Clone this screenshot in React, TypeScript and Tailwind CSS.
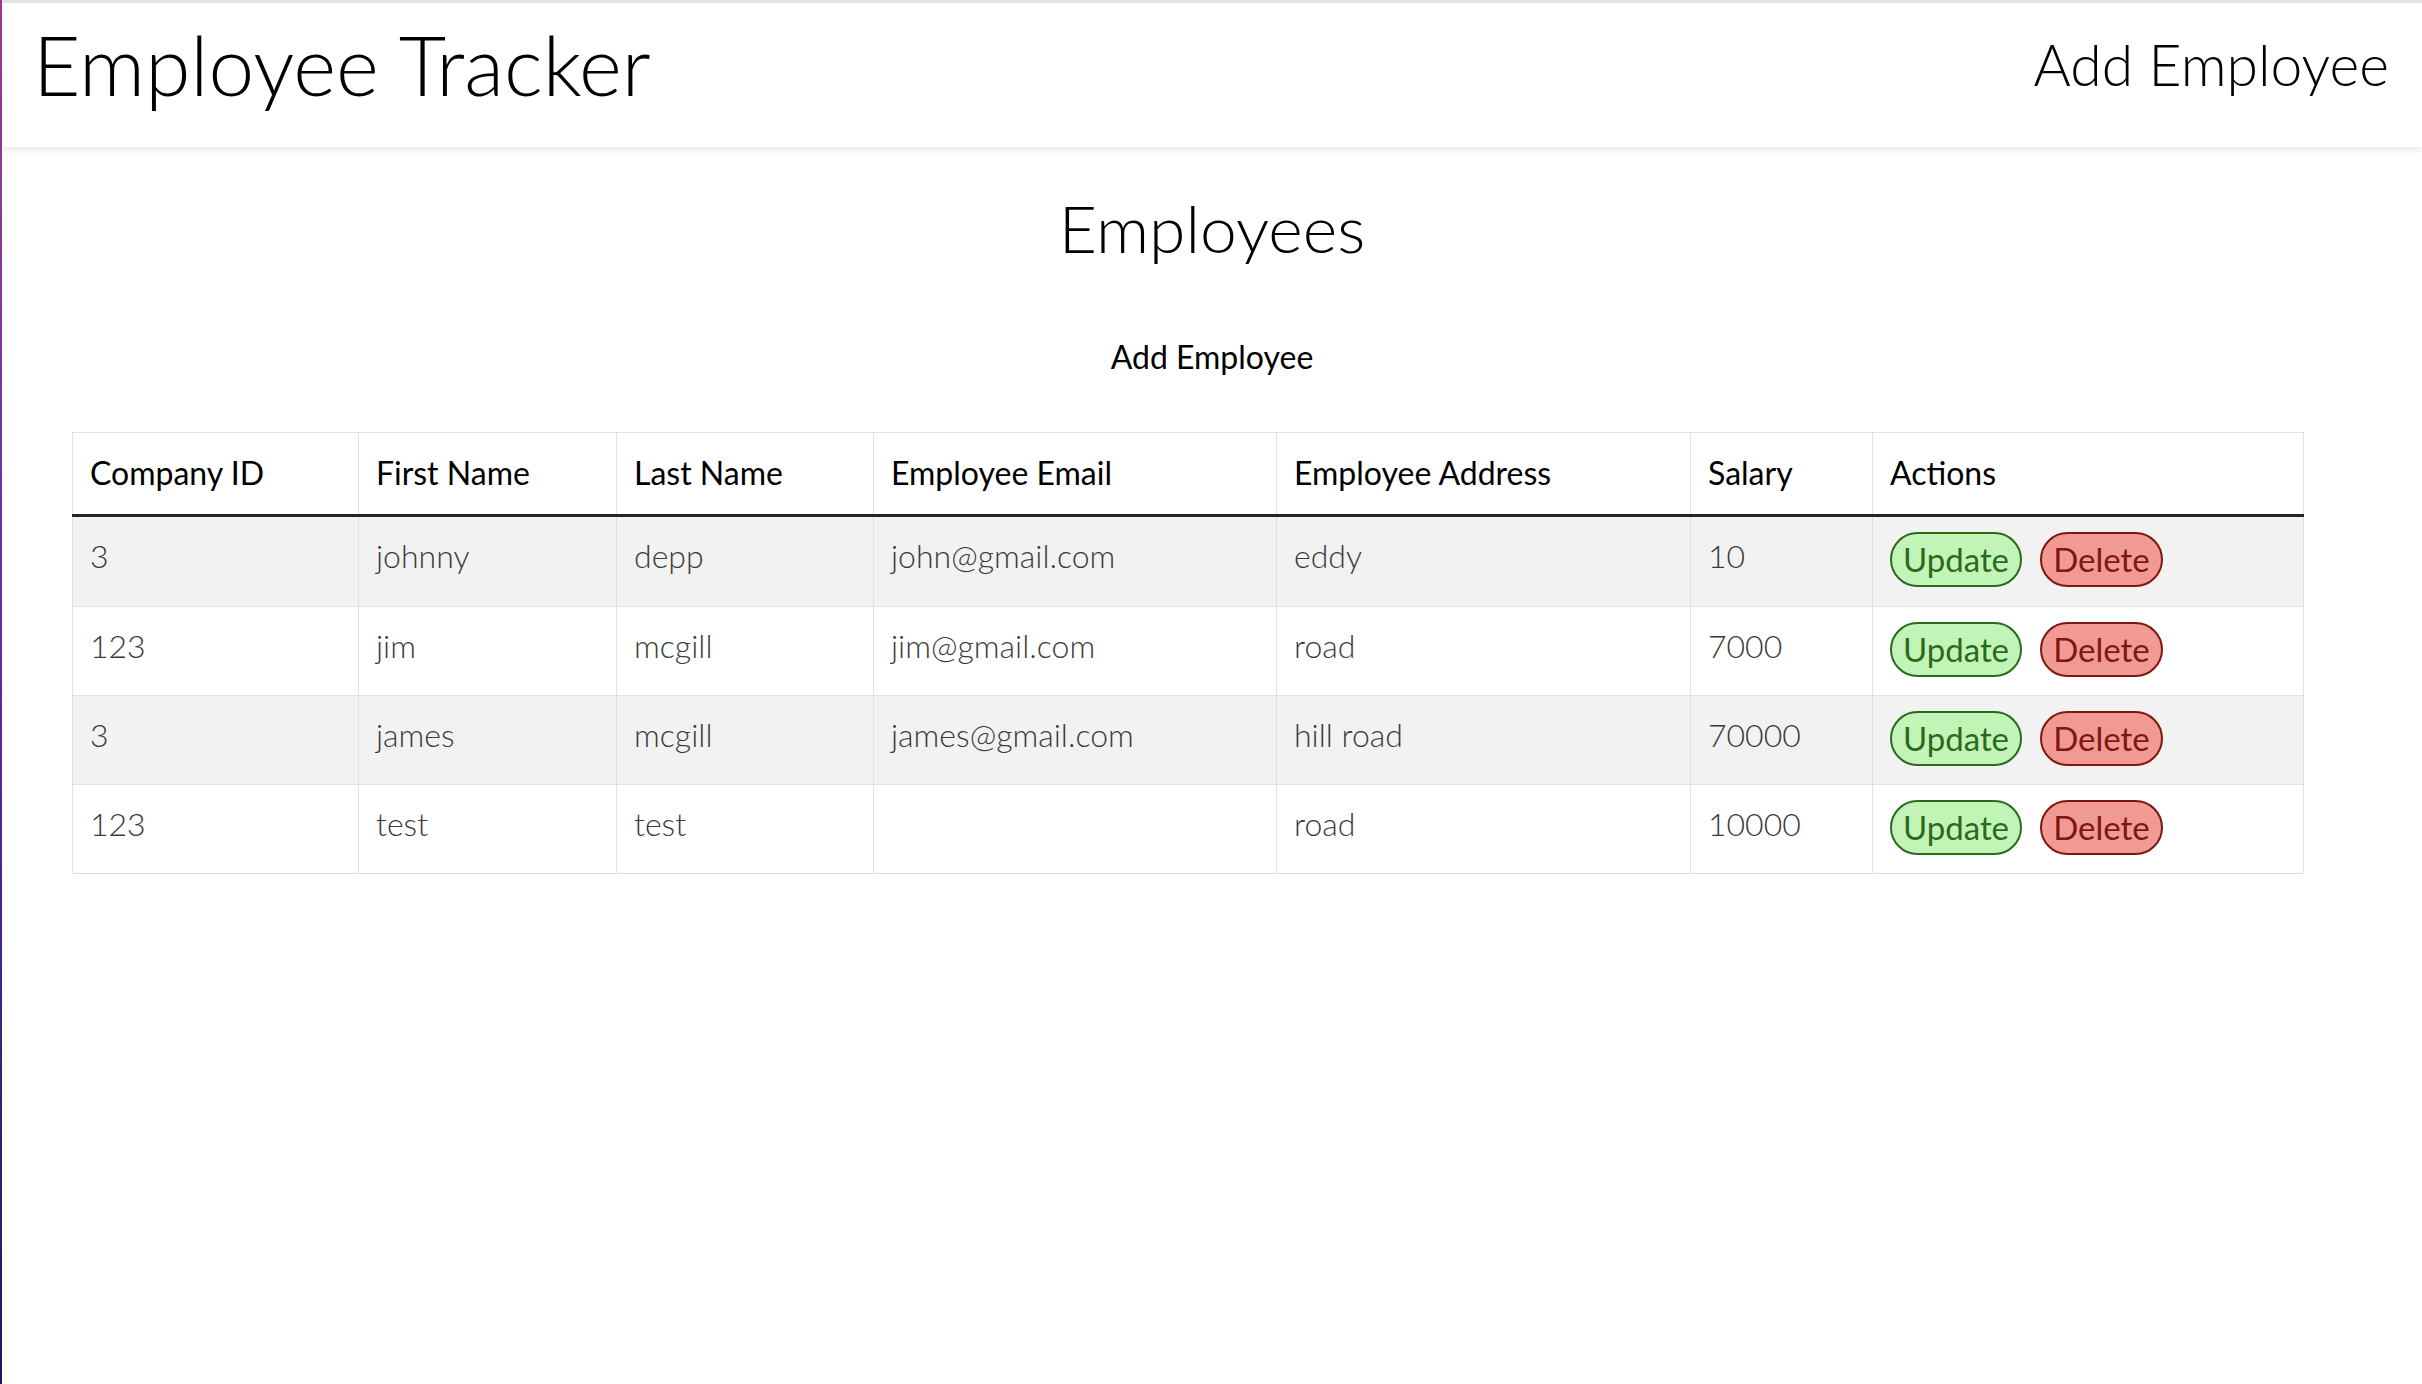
import React from 'react';

const employees = [
  { companyId: '3', firstName: 'johnny', lastName: 'depp', email: 'john@gmail.com', address: 'eddy', salary: '10' },
  { companyId: '123', firstName: 'jim', lastName: 'mcgill', email: 'jim@gmail.com', address: 'road', salary: '7000' },
  { companyId: '3', firstName: 'james', lastName: 'mcgill', email: 'james@gmail.com', address: 'hill road', salary: '70000' },
  { companyId: '123', firstName: 'test', lastName: 'test', email: '', address: 'road', salary: '10000' },
];

const headers = ['Company ID', 'First Name', 'Last Name', 'Employee Email', 'Employee Address', 'Salary', 'Actions'];
const widths = ['w-[286px]', 'w-[258px]', 'w-[257px]', 'w-[403px]', 'w-[414px]', 'w-[182px]', 'w-[431px]'];

const App: React.FC = () => {
  return <div className="flex min-h-screen bg-white font-['Lato','Liberation_Sans',sans-serif] text-black">
      {/* desktop edge showing through on the left */}
      <div className="w-[2px] shrink-0 bg-gradient-to-b from-[#a23a92] via-[#5b2aa3] to-[#1e1659]"></div>

      <div className="flex-1 min-w-0">
        <nav className="flex justify-between items-start h-[147px] border-t-[3px] border-[#e2e2e2] bg-white shadow-[0_3px_6px_rgba(0,0,0,0.09)] pl-[31px] pr-[33px]">
          <h1 className="mt-[20px] text-[82px] font-light leading-none">Employee Tracker</h1>
          <a className="mt-[33px] text-[57px] font-light leading-none">Add Employee</a>
        </nav>

        <main className="flex flex-col items-center">
          <h2 className="mt-[48px] text-[66px] font-light leading-none">Employees</h2>
          <a className="mt-[80px] text-[32px] leading-none">Add Employee</a>
        </main>

        <table className="mt-[59px] ml-[70px] w-[2231px] table-fixed border-collapse border border-[#dee2e6] text-[32px]">
          <colgroup>
            {widths.map((w, i) => <col key={i} className={w} />)}
          </colgroup>
          <thead>
            <tr className="h-[83px]">
              {headers.map(h => <th key={h} className="border-x border-[#dee2e6] border-b-[3px] border-b-[#212529] px-[17px] pt-[16px] align-top text-left font-normal leading-[1.5]">
                  {h}
                </th>)}
            </tr>
          </thead>
          <tbody>
            {employees.map((e, i) => <tr key={i} className={`${i === 0 ? 'h-[91px]' : 'h-[89px]'} ${i % 2 === 0 ? 'bg-[#f2f2f2]' : 'bg-white'}`}>
                {[e.companyId, e.firstName, e.lastName, e.email, e.address, e.salary].map((v, j) => <td key={j} className="border border-[#dee2e6] px-[17px] pt-[15px] align-top font-light leading-[1.5] text-[#3a3a3a]">
                    {v}
                  </td>)}
                <td className="border border-[#dee2e6] px-[17px] pt-[15px] align-top">
                  <div className="flex gap-[18px]">
                    <button className="h-[55px] w-[132px] rounded-full border-2 border-[#2a6a1c] bg-[#c2f4b8] text-[33px] leading-none text-[#2a6a1c]">Update</button>
                    <button className="h-[55px] w-[123px] rounded-full border-2 border-[#7d1710] bg-[#f19a93] text-[33px] leading-none text-[#7d1710]">Delete</button>
                  </div>
                </td>
              </tr>)}
          </tbody>
        </table>
      </div>
    </div>;
};

export default App;
